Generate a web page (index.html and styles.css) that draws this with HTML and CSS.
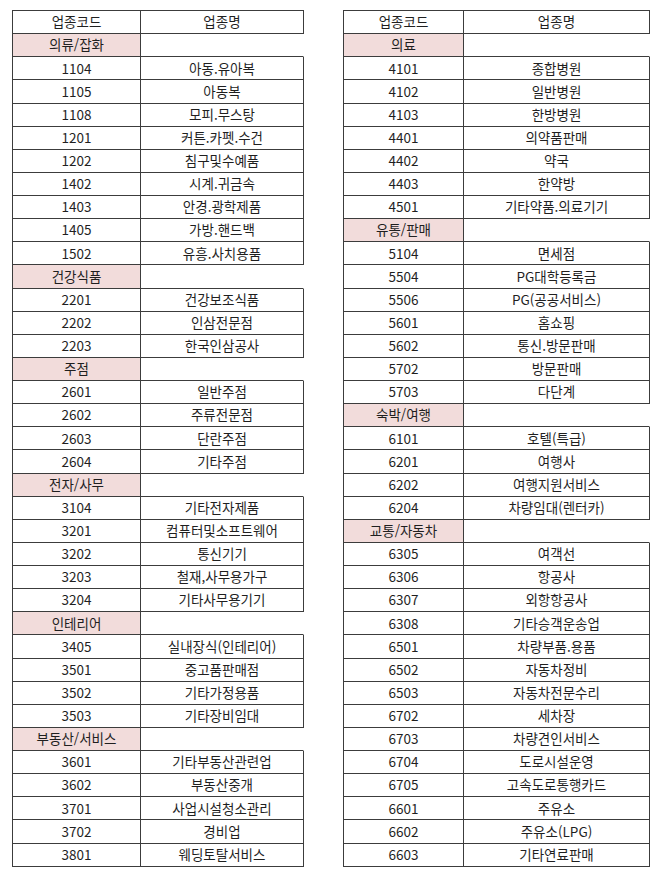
FILE: index.html
```html
<!DOCTYPE html>
<html lang="ko">
<head>
<meta charset="utf-8">
<title>업종코드</title>
<link rel="stylesheet" href="styles.css">
</head>
<body>
<div class="page">
  <div class="tbl tbl-left">
    <div class="c">업종코드</div><div class="c">업종명</div>
    <div class="c cat">의류/잡화</div><div class="c blank"></div>
    <div class="c">1104</div><div class="c">아동.유아복</div>
    <div class="c">1105</div><div class="c">아동복</div>
    <div class="c">1108</div><div class="c">모피.무스탕</div>
    <div class="c">1201</div><div class="c">커튼.카펫.수건</div>
    <div class="c">1202</div><div class="c">침구및수예품</div>
    <div class="c">1402</div><div class="c">시계.귀금속</div>
    <div class="c">1403</div><div class="c">안경.광학제품</div>
    <div class="c">1405</div><div class="c">가방.핸드백</div>
    <div class="c">1502</div><div class="c">유흥.사치용품</div>
    <div class="c cat">건강식품</div><div class="c blank"></div>
    <div class="c">2201</div><div class="c">건강보조식품</div>
    <div class="c">2202</div><div class="c">인삼전문점</div>
    <div class="c">2203</div><div class="c">한국인삼공사</div>
    <div class="c cat">주점</div><div class="c blank"></div>
    <div class="c">2601</div><div class="c">일반주점</div>
    <div class="c">2602</div><div class="c">주류전문점</div>
    <div class="c">2603</div><div class="c">단란주점</div>
    <div class="c">2604</div><div class="c">기타주점</div>
    <div class="c cat">전자/사무</div><div class="c blank"></div>
    <div class="c">3104</div><div class="c">기타전자제품</div>
    <div class="c">3201</div><div class="c">컴퓨터및소프트웨어</div>
    <div class="c">3202</div><div class="c">통신기기</div>
    <div class="c">3203</div><div class="c">철재,사무용가구</div>
    <div class="c">3204</div><div class="c">기타사무용기기</div>
    <div class="c cat">인테리어</div><div class="c blank"></div>
    <div class="c">3405</div><div class="c">실내장식(인테리어)</div>
    <div class="c">3501</div><div class="c">중고품판매점</div>
    <div class="c">3502</div><div class="c">기타가정용품</div>
    <div class="c">3503</div><div class="c">기타장비임대</div>
    <div class="c cat">부동산/서비스</div><div class="c blank"></div>
    <div class="c">3601</div><div class="c">기타부동산관련업</div>
    <div class="c">3602</div><div class="c">부동산중개</div>
    <div class="c">3701</div><div class="c">사업시설청소관리</div>
    <div class="c">3702</div><div class="c">경비업</div>
    <div class="c">3801</div><div class="c">웨딩토탈서비스</div>
  </div>
  <div class="tbl tbl-right">
    <div class="c">업종코드</div><div class="c">업종명</div>
    <div class="c cat">의료</div><div class="c blank"></div>
    <div class="c">4101</div><div class="c">종합병원</div>
    <div class="c">4102</div><div class="c">일반병원</div>
    <div class="c">4103</div><div class="c">한방병원</div>
    <div class="c">4401</div><div class="c">의약품판매</div>
    <div class="c">4402</div><div class="c">약국</div>
    <div class="c">4403</div><div class="c">한약방</div>
    <div class="c">4501</div><div class="c">기타약품.의료기기</div>
    <div class="c cat">유통/판매</div><div class="c blank"></div>
    <div class="c">5104</div><div class="c">면세점</div>
    <div class="c">5504</div><div class="c">PG대학등록금</div>
    <div class="c">5506</div><div class="c">PG(공공서비스)</div>
    <div class="c">5601</div><div class="c">홈쇼핑</div>
    <div class="c">5602</div><div class="c">통신.방문판매</div>
    <div class="c">5702</div><div class="c">방문판매</div>
    <div class="c">5703</div><div class="c">다단계</div>
    <div class="c cat">숙박/여행</div><div class="c blank"></div>
    <div class="c">6101</div><div class="c">호텔(특급)</div>
    <div class="c">6201</div><div class="c">여행사</div>
    <div class="c">6202</div><div class="c">여행지원서비스</div>
    <div class="c">6204</div><div class="c">차량임대(렌터카)</div>
    <div class="c cat">교통/자동차</div><div class="c blank"></div>
    <div class="c">6305</div><div class="c">여객선</div>
    <div class="c">6306</div><div class="c">항공사</div>
    <div class="c">6307</div><div class="c">외항항공사</div>
    <div class="c">6308</div><div class="c">기타승객운송업</div>
    <div class="c">6501</div><div class="c">차량부품.용품</div>
    <div class="c">6502</div><div class="c">자동차정비</div>
    <div class="c">6503</div><div class="c">자동차전문수리</div>
    <div class="c">6702</div><div class="c">세차장</div>
    <div class="c">6703</div><div class="c">차량견인서비스</div>
    <div class="c">6704</div><div class="c">도로시설운영</div>
    <div class="c">6705</div><div class="c">고속도로통행카드</div>
    <div class="c">6601</div><div class="c">주유소</div>
    <div class="c">6602</div><div class="c">주유소(LPG)</div>
    <div class="c">6603</div><div class="c">기타연료판매</div>
  </div>
</div>
</body>
</html>
```
FILE: styles.css
```css
html, body {
  margin: 0;
  padding: 0;
  background: #ffffff;
}
.page {
  display: flex;
  align-items: flex-start;
  gap: 39px;
  padding: 10px 0 0 12px;
  font-family: "Noto Sans CJK KR", "Noto Sans", sans-serif;
  font-size: 13.5px;
  color: #1f1f1f;
}
.tbl {
  display: grid;
  grid-auto-rows: 23.13px;
  border-top: 1px solid #3c3c3c;
  border-left: 1px solid #3c3c3c;
}
.tbl-left {
  grid-template-columns: 128px 163px;
}
.tbl-right {
  grid-template-columns: 120px 186px;
}
.c {
  box-sizing: border-box;
  border-right: 1px solid #3c3c3c;
  border-bottom: 1px solid #3c3c3c;
  display: flex;
  align-items: center;
  justify-content: center;
  white-space: nowrap;
  line-height: 1;
}
.cat {
  background: #f2dcdb;
}
.blank {
  border-right-color: transparent;
}
```
